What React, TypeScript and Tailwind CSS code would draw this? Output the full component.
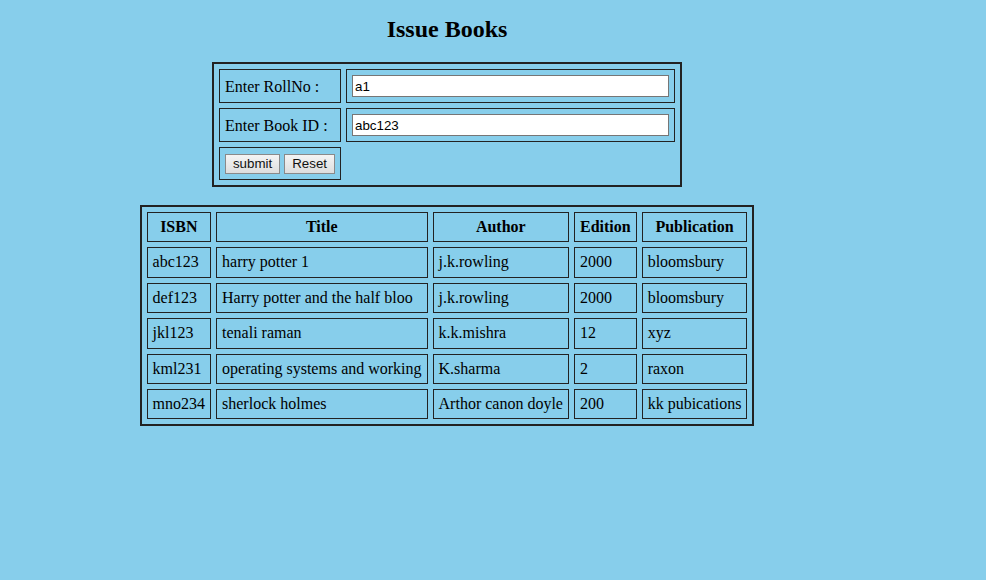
import React from 'react';

const books = [
  { isbn: 'abc123', title: 'harry potter 1', author: 'j.k.rowling', edition: '2000', publication: 'bloomsbury' },
  { isbn: 'def123', title: 'Harry potter and the half bloo', author: 'j.k.rowling', edition: '2000', publication: 'bloomsbury' },
  { isbn: 'jkl123', title: 'tenali raman', author: 'k.k.mishra', edition: '12', publication: 'xyz' },
  { isbn: 'kml231', title: 'operating systems and working', author: 'K.sharma', edition: '2', publication: 'raxon' },
  { isbn: 'mno234', title: 'sherlock holmes', author: 'Arthor canon doyle', edition: '200', publication: 'kk pubications' },
];

const cell = 'border border-[#222] p-[5px] align-middle';
const input =
  "block w-[317px] h-[22px] bg-white border border-[#767676] px-[2px] text-[13.33px] text-black font-['Liberation_Sans',Arial,sans-serif] outline-none";
const btn =
  "h-[20px] px-[7px] border border-[#8a8a8a] bg-gradient-to-b from-[#f4f4f4] to-[#dedede] text-[13.33px] leading-none text-[#111] font-['Liberation_Sans',Arial,sans-serif]";

export default function App() {
  return (
    <div className="min-h-[580px] w-full bg-[#87ceeb] text-black font-['Liberation_Serif','Times_New_Roman',serif] text-[16px] leading-[normal]">
      <div className="w-[894px] flex flex-col items-center">
        {/* heading */}
        <h2 className="mt-[16px] mb-[19px] text-[24px] leading-[27px] font-bold">Issue Books</h2>

        {/* issue form */}
        <table className="border-separate border-spacing-[5px] border-2 border-[#222]">
          <tbody>
            <tr>
              <td className={`${cell} w-[122px] pt-[6px] pb-[4px]`}>Enter RollNo :</td>
              <td className={cell}>
                <input defaultValue="a1" className={input} />
              </td>
            </tr>
            <tr>
              <td className={`${cell} w-[122px] pt-[6px] pb-[4px]`}>Enter Book ID :</td>
              <td className={cell}>
                <input defaultValue="abc123" className={input} />
              </td>
            </tr>
            <tr>
              <td className={cell}>
                <div className="flex items-center gap-[4px] h-[21px]">
                  <button className={btn}>submit</button>
                  <button className={btn}>Reset</button>
                </div>
              </td>
            </tr>
          </tbody>
        </table>
        <div className="h-[18px]" />

        {/* books list */}
        <table className="border-separate border-spacing-[5px] border-2 border-[#222] leading-[18.4px]">
          <thead>
            <tr>
              <th className={`${cell} font-bold text-center`}>ISBN</th>
              <th className={`${cell} font-bold text-center`}>Title</th>
              <th className={`${cell} font-bold text-center`}>Author</th>
              <th className={`${cell} font-bold text-center`}>Edition</th>
              <th className={`${cell} font-bold text-center`}>Publication</th>
            </tr>
          </thead>
          <tbody>
            {books.map((b) => (
              <tr key={b.isbn}>
                <td className={`${cell} text-left`}>{b.isbn}</td>
                <td className={`${cell} text-left`}>{b.title}</td>
                <td className={`${cell} text-left`}>{b.author}</td>
                <td className={`${cell} text-left`}>{b.edition}</td>
                <td className={`${cell} text-left`}>{b.publication}</td>
              </tr>
            ))}
          </tbody>
        </table>
      </div>
    </div>
  );
}
